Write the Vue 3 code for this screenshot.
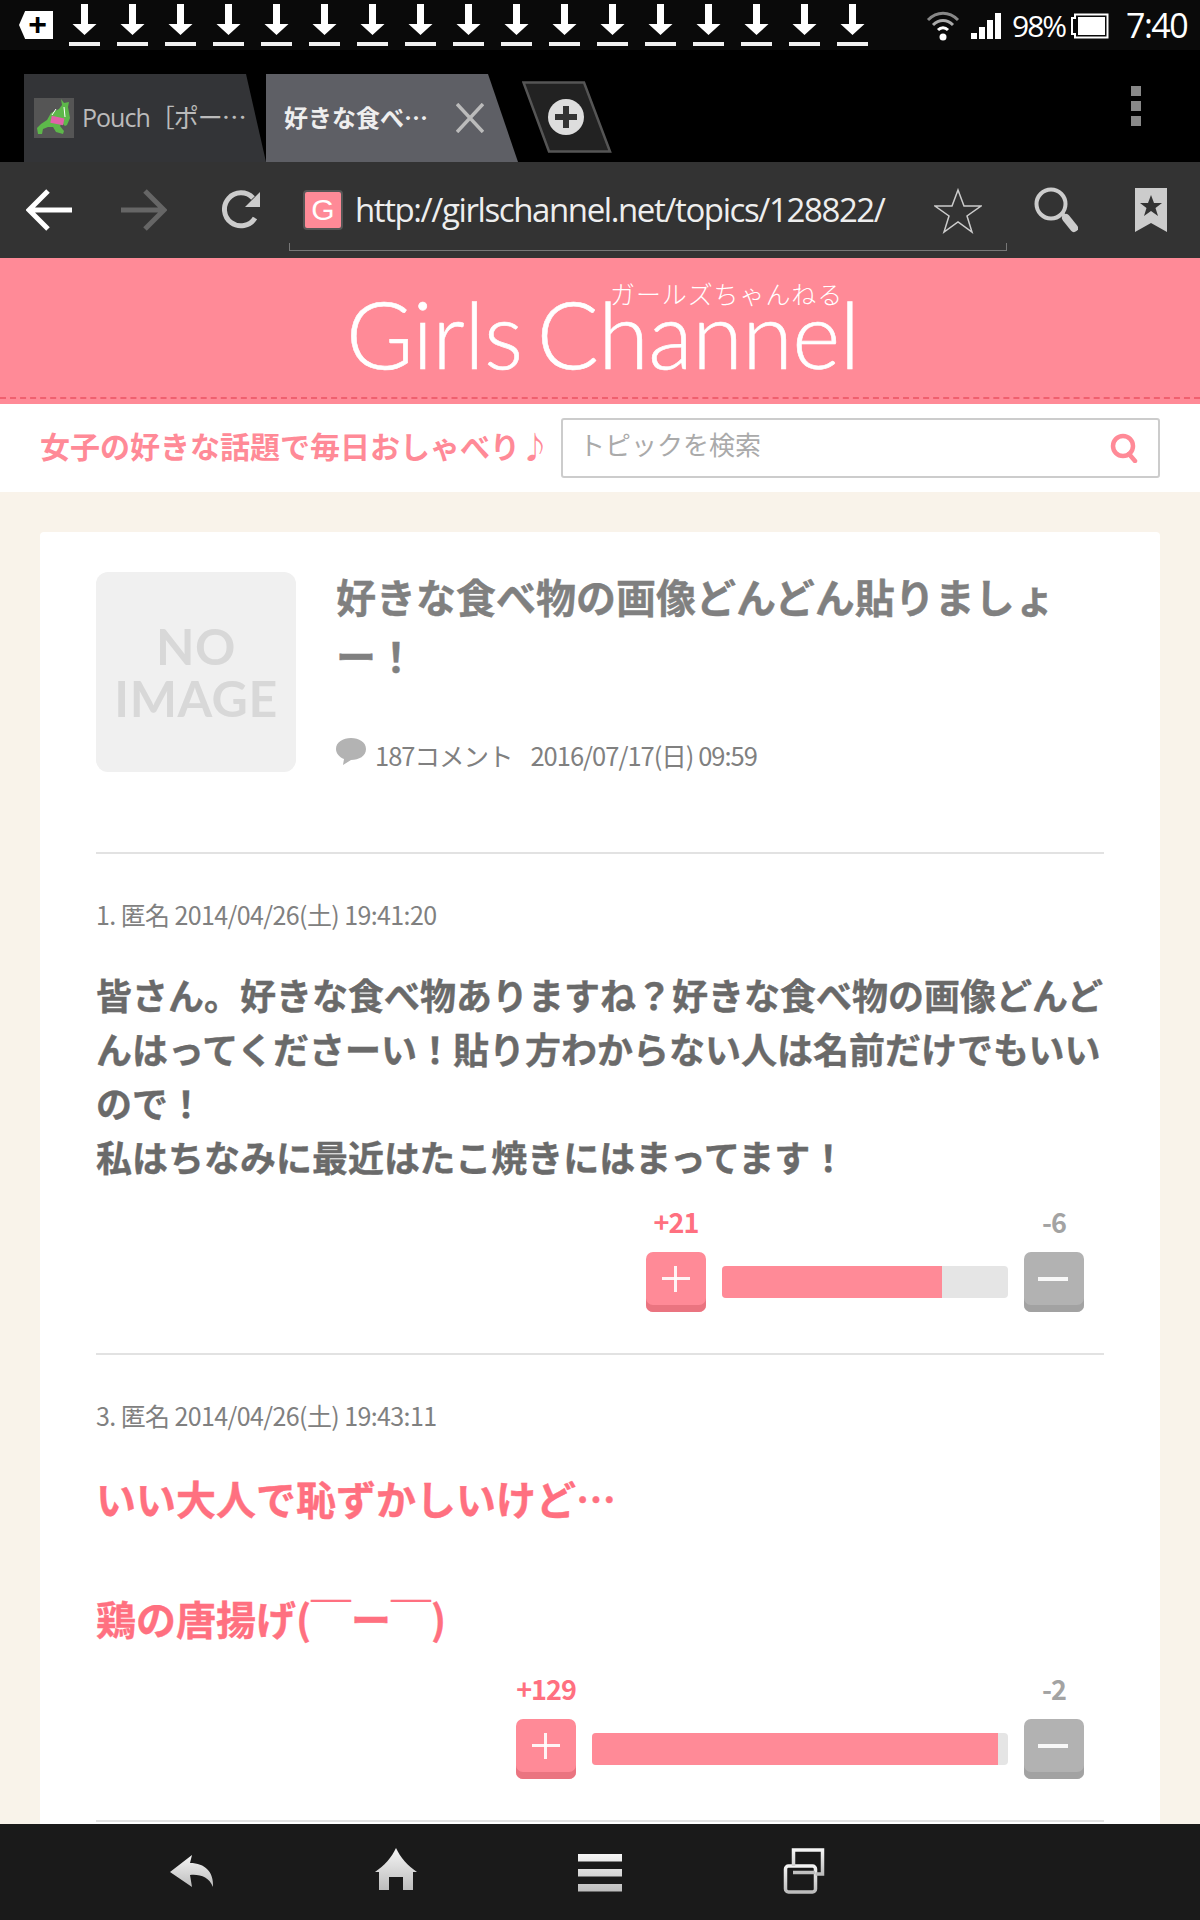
<template>
  <div class="screen">
    <div class="status">
      <span class="tag">+</span>
      <div class="downloads">
        <svg v-for="n in 17" :key="n" class="dl" viewBox="0 0 31 42">
          <path d="M12 0h7v20h8.500L15.500 31 3.500 20H12z" fill="#fff" />
          <rect y="38" width="31" height="4" fill="#f2f2f2" />
        </svg>
      </div>
      <div class="status-right">
        <svg class="wifi" viewBox="0 0 34 32" fill="none">
          <path d="M2 11C11 2 23 2 32 11" stroke="#888" stroke-width="3" />
          <path d="M7 16C13 10 21 10 27 16" stroke="#aaa" stroke-width="3" />
          <path d="M12 21C15 18 19 18 22 21" stroke="#fff" stroke-width="3" />
          <circle cx="17" cy="28" r="3.500" fill="#fff" />
        </svg>
        <svg class="signal" viewBox="0 0 30 26" fill="#fff">
          <rect y="20" width="6" height="6" />
          <rect x="8" y="14" width="6" height="12" />
          <rect x="16" y="7" width="6" height="19" />
          <rect x="24" width="6" height="26" />
        </svg>
        <span class="pct">98%</span>
        <svg class="batt" viewBox="0 0 38 26">
          <path d="M4 5V1.500h32.500v23H4V21H1V5z" fill="none" stroke="#fff" stroke-width="2" />
          <rect x="7" y="4" width="27" height="18" fill="#fff" />
        </svg>
        <span class="clock">7:40</span>
      </div>
    </div>

    <div class="tabs">
      <div class="tab tab-off">
        <svg class="roo" viewBox="0 0 40 40">
          <rect width="40" height="40" fill="#555" />
          <path d="M27 1l3 4 5-1-1 5 2 11-3 7-2 1-3-3-2 3 4 5-1 3-7-2-3-5h-5l-5 2-1 5H4l-1-6 4-4 6-4 4-7 8-4 3-4z" fill="#5db84a" />
          <rect x="17" y="19" width="13" height="7" fill="#e063a8" transform="rotate(12 23 22)" />
          <path d="M18 17l4-6M30 9l1 10" stroke="#fff" stroke-width="1" fill="none" />
        </svg>
        <span class="tab-label">Pouch［ポー<span class="cjk">…</span></span>
      </div>
      <div class="tab tab-on">
        <span class="tab-label">好きな食べ…</span>
        <svg class="tab-close" viewBox="0 0 28 30" stroke="#bbb" stroke-width="3.500">
          <path d="M1 1l26 28M27 1L1 29" />
        </svg>
      </div>
      <svg class="tab-new" viewBox="0 0 90 72">
        <path d="M1.500 1.500H62L88 70.500H27z" fill="#222" stroke="#555" stroke-width="2.500" />
        <circle cx="44" cy="36" r="18" fill="#ddd" />
        <path d="M41 25h6v8h8v6h-8v8h-6v-8h-8v-6h8z" fill="#333" />
      </svg>
      <div class="menu"><i></i><i></i><i></i></div>
    </div>

    <div class="toolbar">
      <svg class="nav-ic" viewBox="0 0 46 42" fill="none" stroke="#fff" stroke-width="5">
        <path d="M46 21H4M22 2L3 21l19 19" />
      </svg>
      <svg class="nav-ic fwd" viewBox="0 0 46 42" fill="none" stroke="#666" stroke-width="5">
        <path d="M0 21h42M24 2l19 19-19 19" />
      </svg>
      <svg class="reload" viewBox="0 0 40 40" fill="none">
        <path d="M33 28A16.500 16.500 0 1 1 31 8" stroke="#ccc" stroke-width="5" />
        <path d="M38 2v15H23z" fill="#ccc" />
      </svg>
      <div class="url-box">
        <span class="favicon">G</span>
        <span class="url">http://girlschannel.net/topics/128822/</span>
        <svg class="star" viewBox="0 0 48 46" fill="none" stroke="#ccc" stroke-width="1.500">
          <path d="M24 2l6 16h17L33 28l5 16-14-10-14 10 5-16L1 18h17z" />
        </svg>
      </div>
      <svg class="find" viewBox="0 0 44 46" fill="none" stroke="#ccc">
        <circle cx="17" cy="17" r="14.500" stroke-width="4" />
        <path d="M28 29l3-2" stroke-width="4" />
        <path d="M32 31l8 10" stroke-width="8" stroke-linecap="round" />
      </svg>
      <svg class="mark" viewBox="0 0 32 44">
        <path d="M0 0h32v44L16 35 0 44z" fill="#ccc" />
        <path d="M16 7l3 8h8l-6.500 5 2.500 8-7-5-7 5 2.500-8L5 15h8z" fill="#333" />
      </svg>
    </div>

    <header class="brand">
      <div class="logo">
        <span class="logo-kana">ガールズちゃんねる</span>
        <span class="logo-main">Girls Channel</span>
      </div>
    </header>

    <div class="search-row">
      <span class="tagline">女子の好きな話題で毎日おしゃべり♪</span>
      <div class="search-box">
        <span class="placeholder">トピックを検索</span>
        <svg class="search-ic" viewBox="0 0 28 30" fill="none" stroke="#ff8a97" stroke-width="4.500">
          <circle cx="13" cy="13" r="10" />
          <path d="M19 21l6 7" stroke-linecap="round" />
        </svg>
      </div>
    </div>

    <main class="page">
      <div class="card">
        <section class="topic">
          <div class="noimage"><span>NO</span><span>IMAGE</span></div>
          <div class="topic-body">
            <h1>好きな食べ物の画像どんどん貼りましょー！</h1>
            <p class="meta">
              <svg class="bubble" viewBox="0 0 30 28">
                <path d="M15 0c8 0 15 4 15 11s-7 11-15 11l-8 5 1-6C3 19 0 15 0 11 0 4 7 0 15 0z" fill="#b3b3b3" />
              </svg>
              <span>187コメント</span>
              <span class="date">2016/07/17(日) 09:59</span>
            </p>
          </div>
        </section>

        <section v-for="c in comments" :key="c.id" class="comment">
          <p class="c-head">{{ c.id }}. 匿名 {{ c.date }}</p>
          <div class="c-text" :class="{ hot: c.hot }">
            <p v-for="(line, i) in c.lines" :key="i">{{ line }}<br v-if="!line" /></p>
          </div>
          <div class="votes">
            <div class="vote-col">
              <span class="num plus">+{{ c.plus }}</span>
              <button class="btn btn-plus"><i class="h"></i><i class="v"></i></button>
            </div>
            <div class="bar" :style="{ width: c.barWidth + 'px' }">
              <div class="fill" :style="{ width: c.fill + '%' }"></div>
            </div>
            <div class="vote-col">
              <span class="num minus">-{{ c.minus }}</span>
              <button class="btn btn-minus"><i class="h"></i></button>
            </div>
          </div>
        </section>
      </div>
    </main>

    <footer class="bottom">
      <svg class="b-ic" viewBox="0 0 44 50">
        <defs>
          <linearGradient id="metal" x1="0" y1="0" x2="0" y2="1">
            <stop offset="0" stop-color="#f5f5f5" />
            <stop offset="1" stop-color="#bdbdbd" />
          </linearGradient>
        </defs>
        <path d="M22 8L0 25l22 15-2-12c10-1 19 2 23 12 1-15-8-24-23-24z" fill="url(#metal)" />
      </svg>
      <svg class="b-ic" viewBox="0 0 44 50">
        <path d="M22 1c4 9 12 18 21 24h-4v18H29V30H15v13H5V25H1C10 19 18 10 22 1z" fill="url(#metal)" />
      </svg>
      <svg class="b-ic" viewBox="0 0 44 50">
        <path d="M0 7h44v7.500H0zM0 22h44v7.500H0zM0 37h44v7.500H0z" fill="url(#metal)" />
      </svg>
      <svg class="b-ic" viewBox="0 0 44 50" fill="none" stroke="url(#metal)" stroke-width="3.500">
        <rect x="3.500" y="19" width="30" height="26" rx="3" />
        <path d="M11.500 19V3h29v24h-7M11 25.500h22" />
      </svg>
    </footer>
  </div>
</template>

<script setup>
const comments = [
  {
    id: 1,
    date: "2014/04/26(土) 19:41:20",
    lines: [
      "皆さん。好きな食べ物ありますね？好きな食べ物の画像どんどんはってくださーい！貼り方わからない人は名前だけでもいいので！",
      "私はちなみに最近はたこ焼きにはまってます！",
    ],
    plus: 21,
    minus: 6,
    barWidth: 286,
    fill: 76.9,
    hot: false,
  },
  {
    id: 3,
    date: "2014/04/26(土) 19:43:11",
    lines: ["いい大人で恥ずかしいけど…", "", "鶏の唐揚げ(￣ー￣)"],
    plus: 129,
    minus: 2,
    barWidth: 416,
    fill: 97.6,
    hot: true,
  },
];
</script>

<style>
html,
body {
  margin: 0;
  background: #000;
}
</style>

<style scoped>
.screen {
  width: 1200px;
  height: 1920px;
  display: flex;
  flex-direction: column;
  overflow: hidden;
  font-family: "Noto Sans CJK JP", "Open Sans", sans-serif;
}

p,
h1 {
  margin: 0;
}

.status {
  height: 50px;
  flex: none;
  background: #0a0a0a;
  display: flex;
  align-items: flex-start;
  color: #fff;
  box-sizing: border-box;
  padding-left: 19px;
}

.tag {
  width: 34px;
  height: 28px;
  margin-top: 11px;
  background: #fff;
  color: #000;
  clip-path: polygon(18% 0, 100% 0, 100% 100%, 18% 100%, 0 50%);
  font: bold 32px/26px "Liberation Sans", sans-serif;
  text-align: center;
  text-indent: 3px;
}

.downloads {
  display: flex;
  gap: 17px;
  margin-left: 16px;
  margin-top: 4px;
}

.dl {
  width: 31px;
  height: 42px;
}

.status-right {
  display: flex;
  align-items: center;
  margin-left: 58px;
  height: 50px;
}

.wifi {
  width: 34px;
  height: 32px;
}

.signal {
  width: 30px;
  height: 26px;
  margin-left: 11px;
  margin-top: 2px;
}

.pct {
  font: 30px "Open Sans", sans-serif;
  letter-spacing: -2px;
  margin-left: 11px;
  width: 56px;
}

.batt {
  width: 38px;
  height: 26px;
  margin-left: 3px;
  margin-top: 2px;
}

.clock {
  font: 34px "Open Sans", sans-serif;
  letter-spacing: -1.500px;
  margin-left: 17px;
}

.tabs {
  height: 112px;
  flex: none;
  background: #000;
  display: flex;
  align-items: flex-end;
  padding-left: 24px;
  position: relative;
}

.tab {
  height: 88px;
  display: flex;
  align-items: center;
  box-sizing: border-box;
  font-size: 26px;
}

.tab-off {
  width: 242px;
  background: #333437;
  color: #bbb;
  clip-path: polygon(0 0, 222px 0, 100% 100%, 0 100%);
  padding-left: 10px;
}

.tab-on {
  width: 252px;
  background: #5e5f65;
  color: #eee;
  font-weight: 700;
  clip-path: polygon(0 0, 222px 0, 100% 100%, 0 100%);
  padding-left: 18px;
}

.roo {
  width: 40px;
  height: 40px;
  flex: none;
  margin-right: 8px;
}

.tab-off .tab-label {
  font-size: 25px;
  font-family: "Open Sans", "Noto Sans CJK JP", sans-serif;
  white-space: nowrap;
  letter-spacing: -1px;
  margin-top: -4px;
}

.cjk {
  font-family: "Noto Sans CJK JP", sans-serif;
}

.tab-on .tab-label {
  font-size: 24px;
  white-space: nowrap;
  margin-top: -4px;
}

.tab-close {
  width: 28px;
  height: 30px;
  flex: none;
  margin-left: 28px;
}

.tab-new {
  width: 90px;
  height: 72px;
  margin-left: 4px;
  margin-bottom: 9px;
}

.menu {
  display: flex;
  flex-direction: column;
  gap: 5px;
  margin-left: auto;
  margin-right: 59px;
  margin-bottom: 36px;
}

.menu i {
  width: 10px;
  height: 10px;
  background: #888;
}

.toolbar {
  height: 96px;
  flex: none;
  background: #333;
  display: flex;
  align-items: center;
  padding-left: 26px;
}

.nav-ic {
  width: 46px;
  height: 42px;
  flex: none;
}

.fwd {
  margin-left: 49px;
}

.reload {
  width: 40px;
  height: 40px;
  margin-left: 55px;
  flex: none;
}

.url-box {
  width: 718px;
  height: 74px;
  box-sizing: border-box;
  margin-left: 27px;
  margin-top: 0;
  border-bottom: 1px solid #777;
  display: flex;
  align-items: center;
  padding-left: 14px;
  position: relative;
  top: 4px;
}

.url-box::before,
.url-box::after {
  content: "";
  position: absolute;
  bottom: 0;
  height: 7px;
  width: 1px;
  background: #777;
}

.url-box::before {
  left: 0;
}

.url-box::after {
  right: 0;
}

.favicon {
  width: 40px;
  height: 40px;
  box-sizing: border-box;
  border: 2px solid #555;
  border-radius: 4px;
  background: #ff8a97;
  color: #fff;
  font: 30px/35px "Liberation Sans", sans-serif;
  text-align: center;
  flex: none;
  margin-top: -8px;
}

.url {
  color: #eee;
  font: 33px "Open Sans", sans-serif;
  letter-spacing: -1.400px;
  margin-left: 12px;
  width: 528px;
  flex: none;
  white-space: nowrap;
  margin-top: -8px;
}

.star {
  width: 48px;
  height: 46px;
  flex: none;
  margin-left: 51px;
  margin-top: -6px;
}

.find {
  width: 44px;
  height: 46px;
  margin-left: 27px;
  flex: none;
}

.mark {
  width: 32px;
  height: 44px;
  margin-left: 57px;
  flex: none;
}

.brand {
  height: 146px;
  flex: none;
  box-sizing: border-box;
  background: #ff8a97;
  position: relative;
  display: flex;
  justify-content: center;
}

.brand::after {
  content: "";
  position: absolute;
  left: 0;
  right: 0;
  bottom: 5px;
  border-bottom: 2px dashed #f0606f;
}

.logo {
  position: relative;
  width: 508px;
  text-align: center;
}

.logo-kana {
  position: absolute;
  left: 264px;
  top: 17px;
  font-size: 25px;
  font-weight: 300;
  color: #fff;
  white-space: nowrap;
  letter-spacing: 0.9px;
}

.logo-main {
  font-family: Lato, sans-serif;
  font-weight: 300;
  font-size: 92px;
  line-height: 152px;
  color: #fff;
  letter-spacing: -0.6px;
  word-spacing: -10px;
  white-space: nowrap;
  -webkit-text-stroke: 0.6px #fff;
}

.search-row {
  height: 88px;
  flex: none;
  background: #fff;
  display: flex;
  align-items: center;
  padding-left: 40px;
}

.tagline {
  width: 521px;
  flex: none;
  font-size: 30px;
  font-weight: 700;
  color: #ff8a97;
  white-space: nowrap;
  margin-top: -7px;
}

.search-box {
  width: 599px;
  height: 60px;
  box-sizing: border-box;
  border: 2px solid #ccc;
  border-radius: 3px;
  display: flex;
  align-items: center;
  justify-content: space-between;
  padding: 0 20px 0 16px;
}

.placeholder {
  font-size: 26px;
  color: #aaa;
  margin-top: -10px;
}

.search-ic {
  width: 28px;
  height: 30px;
}

.page {
  flex: 1;
  min-height: 0;
  overflow: hidden;
  background: #f9f3ea;
  padding: 40px 40px 0;
}

.card {
  background: #fff;
  border-radius: 4px;
  padding: 40px 56px 60px;
}

.topic {
  display: flex;
  gap: 40px;
  padding-bottom: 79px;
  border-bottom: 2px solid #e2e2e2;
}

.noimage {
  width: 200px;
  height: 200px;
  flex: none;
  border-radius: 12px;
  background: #f0f0f0;
  color: #d8d8d8;
  font: bold 50px/52px Lato, sans-serif;
  letter-spacing: 0.5px;
  display: flex;
  flex-direction: column;
  align-items: center;
  justify-content: center;
}

.topic-body {
  flex: 1;
  min-width: 0;
  margin-top: -5px;
}

h1 {
  font-size: 40px;
  line-height: 59px;
  font-weight: 700;
  color: #808080;
  -webkit-text-stroke: 0.4px #808080;
}

.meta {
  display: flex;
  align-items: center;
  font-size: 25.500px;
  color: #808080;
  margin-top: 51px;
  letter-spacing: -1px;
}

.bubble {
  width: 30px;
  height: 28px;
  margin-right: 9px;
  margin-top: -6px;
}

.date {
  margin-left: 18px;
}

.comment {
  border-bottom: 2px solid #e2e2e2;
  padding: 41px 0 41px;
}

.c-head {
  font-size: 25px;
  line-height: 38px;
  color: #808080;
  letter-spacing: -0.6px;
}

.c-text {
  margin-top: 34px;
  font-size: 36px;
  line-height: 54px;
  font-weight: 700;
  color: #6a6a6a;
  -webkit-text-stroke: 0.4px #6a6a6a;
}

.c-text.hot {
  font-size: 40px;
  line-height: 60px;
  color: #ff7080;
  -webkit-text-stroke: 0.4px #ff7080;
}

.votes {
  display: flex;
  justify-content: flex-end;
  align-items: flex-end;
  gap: 16px;
  padding-right: 20px;
  margin-top: 20px;
}

.hot + .votes {
  margin-top: 22px;
}

.vote-col {
  display: flex;
  flex-direction: column;
  align-items: center;
  width: 60px;
}

.num {
  font-size: 27px;
  line-height: 38px;
  font-weight: 700;
  letter-spacing: -1px;
  margin-bottom: 11px;
}

.num.plus {
  color: #ff7080;
}

.num.minus {
  color: #a3a3a3;
}

.btn {
  width: 60px;
  height: 60px;
  border: 0;
  padding: 0;
  border-radius: 7px;
  position: relative;
}

.btn-plus {
  background: #ff8a97;
  box-shadow: inset 0 -7px 0 #ea7480;
}

.btn-minus {
  background: #b2b2b2;
  box-shadow: inset 0 -7px 0 #a2a2a2;
}

.btn .h {
  position: absolute;
  left: 16px;
  top: 25px;
  width: 28px;
  height: 3px;
  background: #fff;
  opacity: 0.9;
}

.btn-minus .h {
  left: 14px;
  width: 30px;
  height: 4px;
}

.btn .v {
  position: absolute;
  left: 28px;
  top: 14px;
  width: 3px;
  height: 26px;
  background: #fff;
  opacity: 0.9;
}

.bar {
  height: 32px;
  background: #e5e5e5;
  border-radius: 4px;
  overflow: hidden;
  margin-bottom: 14px;
  flex: none;
}

.fill {
  height: 100%;
  background: #ff8a97;
}

.bottom {
  height: 96px;
  flex: none;
  background: #1a1a1a;
  display: flex;
  align-items: center;
  padding-left: 170px;
  gap: 160px;
}

.b-ic {
  width: 44px;
  height: 50px;
  flex: none;
}
</style>
